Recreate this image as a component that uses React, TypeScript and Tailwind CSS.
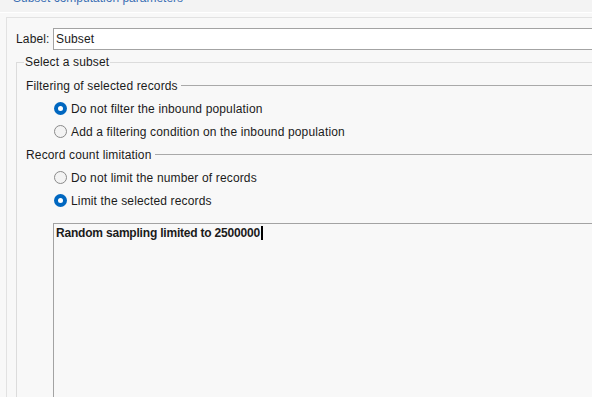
import React from "react";

function Radio({ checked, label }: { checked?: boolean; label: string }) {
  return (
    <div className="flex h-[23px] items-center pl-[37px]">
      {checked ? (
        <div className="flex h-[13px] w-[13px] items-center justify-center rounded-full bg-[#0067c0]">
          <div className="h-[5px] w-[5px] rounded-full bg-white" />
        </div>
      ) : (
        <div className="h-[13px] w-[13px] rounded-full border border-[#8a8a8a] bg-[#f3f3f3]" />
      )}
      <span className="ml-[4px] whitespace-nowrap">{label}</span>
    </div>
  );
}

function Group({ label }: { label: string }) {
  return (
    <div className="flex h-[23px] items-center pl-[9px]">
      <span className="whitespace-nowrap">{label}</span>
      <div className="ml-[3px] h-px flex-1 bg-[#a9a9a9]" />
    </div>
  );
}

export default function App() {
  return (
    <div
      className="flex h-[397px] w-[592px] flex-col overflow-hidden bg-[#f8f8f8] text-[12px] leading-[16px] tracking-[0.15px] text-[#1b1b1b]"
      style={{ fontFamily: "'Segoe UI', 'Liberation Sans', Arial, sans-serif" }}
    >
      <div className="h-[12px] shrink-0 overflow-hidden bg-[#f3f3f3] pl-[13px]">
        <div className="-mt-[10px] whitespace-nowrap tracking-normal text-[#3a6fb3]">Subset computation parameters</div>
      </div>
      <div className="h-px shrink-0 bg-white" />
      <div className="h-[4px] shrink-0" />
      <div className="ml-[6px] flex flex-1 flex-col border-l border-t border-[#e2e2e2]">
        <div className="flex items-center pl-[9px] pt-[10px]">
          <span className="w-[37px] shrink-0">Label:</span>
          <div className="flex h-[22px] flex-1 items-center border-y border-l border-[#a3a3a3] bg-white pl-[2px]">
            Subset
          </div>
        </div>
        <fieldset className="ml-[9px] mt-[4px] flex flex-1 flex-col border-l border-t border-[#dcdcdc]">
          <legend className="ml-[7px] px-[1px]">Select a subset</legend>
          <div className="mt-[4px]" />
          <Group label="Filtering of selected records" />
          <Radio checked label="Do not filter the inbound population" />
          <Radio label="Add a filtering condition on the inbound population" />
          <Group label="Record count limitation" />
          <Radio label="Do not limit the number of records" />
          <Radio checked label="Limit the selected records" />
          <div className="ml-[36px] mt-[11px] flex-1 border-l border-t border-[#a3a3a3] pl-[2px] pt-[1px]">
            <div className="flex items-center font-bold tracking-[-0.2px]">
              <span className="whitespace-nowrap">Random sampling limited to 2500000</span>
              <span className="ml-px inline-block h-[14px] w-[2px] bg-black" />
            </div>
          </div>
        </fieldset>
      </div>
    </div>
  );
}
